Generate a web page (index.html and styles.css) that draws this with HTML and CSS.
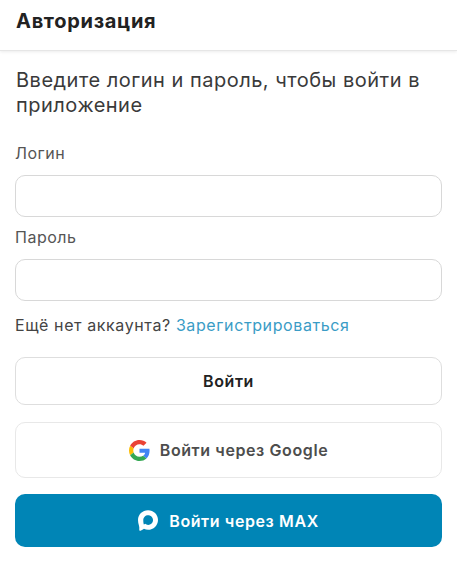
FILE: index.html
```html
<!DOCTYPE html>
<html lang="ru">
<head>
    <meta charset="UTF-8">
    <meta name="viewport" content="width=device-width, initial-scale=1.0">
    <title>Авторизация</title>
    <link rel="stylesheet" href="styles.css">
</head>
<body>
    <header class="header">
        <h1>Авторизация</h1>
    </header>

    <main class="content">
        <p class="intro">Введите логин и пароль, чтобы войти в приложение</p>

        <label class="label label-login" for="login">Логин</label>
        <input id="login" class="field" type="text">

        <label class="label label-password" for="password">Пароль</label>
        <input id="password" class="field" type="password">

        <p class="signup">Ещё нет аккаунта? <a href="#">Зарегистрироваться</a></p>

        <button class="btn btn-login">Войти</button>

        <button class="btn btn-google">
            <svg class="icon-google" viewBox="0 0 48 48" width="21" height="21">
                <path fill="#EA4335" d="M24 9.500c3.500 0 6.700 1.200 9.200 3.600l6.900-6.900C35.900 2.400 30.500 0 24 0 14.600 0 6.500 5.400 2.600 13.200l8 6.200C12.500 13.700 17.800 9.500 24 9.500z"/>
                <path fill="#4285F4" d="M47 24.500c0-1.600-.1-3.100-.4-4.500H24v9h12.900c-.6 3-2.200 5.500-4.700 7.200l7.700 6C44.400 38 47 31.800 47 24.500z"/>
                <path fill="#FBBC05" d="M10.600 28.600c-.5-1.400-.8-3-.8-4.600s.3-3.200.8-4.600l-8-6.200C.9 16.500 0 20.100 0 24s.9 7.500 2.600 10.800l8-6.200z"/>
                <path fill="#34A853" d="M24 48c6.500 0 11.900-2.100 15.900-5.800l-7.700-6c-2.200 1.500-5 2.300-8.200 2.300-6.200 0-11.500-4.200-13.400-9.900l-8 6.200C6.500 42.600 14.600 48 24 48z"/>
            </svg>
            Войти через Google
        </button>

        <button class="btn btn-max">
            <svg class="icon-max" viewBox="2 1.500 20.500 21" width="20" height="21">
                <path fill="#fff" fill-rule="evenodd" d="M12.300 1.500C6.500 1.500 2 5.900 2 11.600c0 2 .4 3.600.9 5.300.4 1.300.6 2.900.4 4.200-.1.800.5 1.500 1.300 1.300 1.300-.3 2.700-1.100 3.500-1.900 1.200.7 2.800 1.100 4.200 1.100 5.600 0 10.200-4.500 10.200-10.100S18 1.500 12.300 1.500zm.1 5c2.800 0 5 2.200 5 5s-2.200 5-5 5c-1.200 0-2.300-.4-3.100-1.100-.4.400-.9.700-1.300.8-.3-1-.6-2.700-.6-4.500 0-3.100 2.100-5.200 5-5.200z"/>
            </svg>
            Войти через MAX
        </button>
    </main>
</body>
</html>
```

FILE: styles.css
```css
* {
    box-sizing: border-box;
}
body {
    font-family: "Inter", "Noto Sans", sans-serif;
    margin: 0;
    background: #fff;
    color: #333;
}
.header {
    height: 51px;
    padding: 9px 16px 0;
    border-bottom: 1px solid #e6e6e6;
    box-shadow: 0 1px 3px rgba(0,0,0,0.08);
}
.header h1 {
    margin: 0;
    font-size: 20px;
    line-height: 24px;
    font-weight: 700;
    letter-spacing: 0.7px;
    color: #222;
}
.content {
    padding: 17px 15px 0;
}
.intro {
    margin: 0 0 0 1px;
    font-size: 20px;
    line-height: 25px;
    letter-spacing: 0.5px;
    color: #3a3a3a;
}
.label {
    display: block;
    font-size: 16px;
    line-height: 20px;
    letter-spacing: 0.5px;
    color: #555;
}
.label-login {
    margin-top: 25px;
    margin-bottom: 12px;
}
.label-password {
    margin-top: 10px;
    margin-bottom: 12px;
}
.field {
    display: block;
    width: 100%;
    height: 42px;
    border: 1px solid #d8d8d8;
    border-radius: 10px;
    background: #fff;
}
.signup {
    margin: 14px 0 0;
    font-size: 16px;
    line-height: 20px;
    letter-spacing: 0.6px;
    color: #444;
}
.signup a {
    color: #3a9cc6;
    text-decoration: none;
}
.btn {
    display: flex;
    align-items: center;
    justify-content: center;
    width: 100%;
    border-radius: 10px;
    font-family: inherit;
    font-size: 16px;
    font-weight: 600;
    letter-spacing: 0.6px;
    background: #fff;
}
.btn-login {
    height: 48px;
    margin-top: 22px;
    border: 1px solid #dedede;
    color: #222;
}
.btn-google {
    height: 56px;
    margin-top: 17px;
    gap: 10px;
    border: 1px solid #e8e8e8;
    color: #4d4d4d;
}
.btn-max {
    height: 53px;
    margin-top: 16px;
    gap: 11px;
    border: none;
    background: #0085b6;
    color: #fff;
}
```
